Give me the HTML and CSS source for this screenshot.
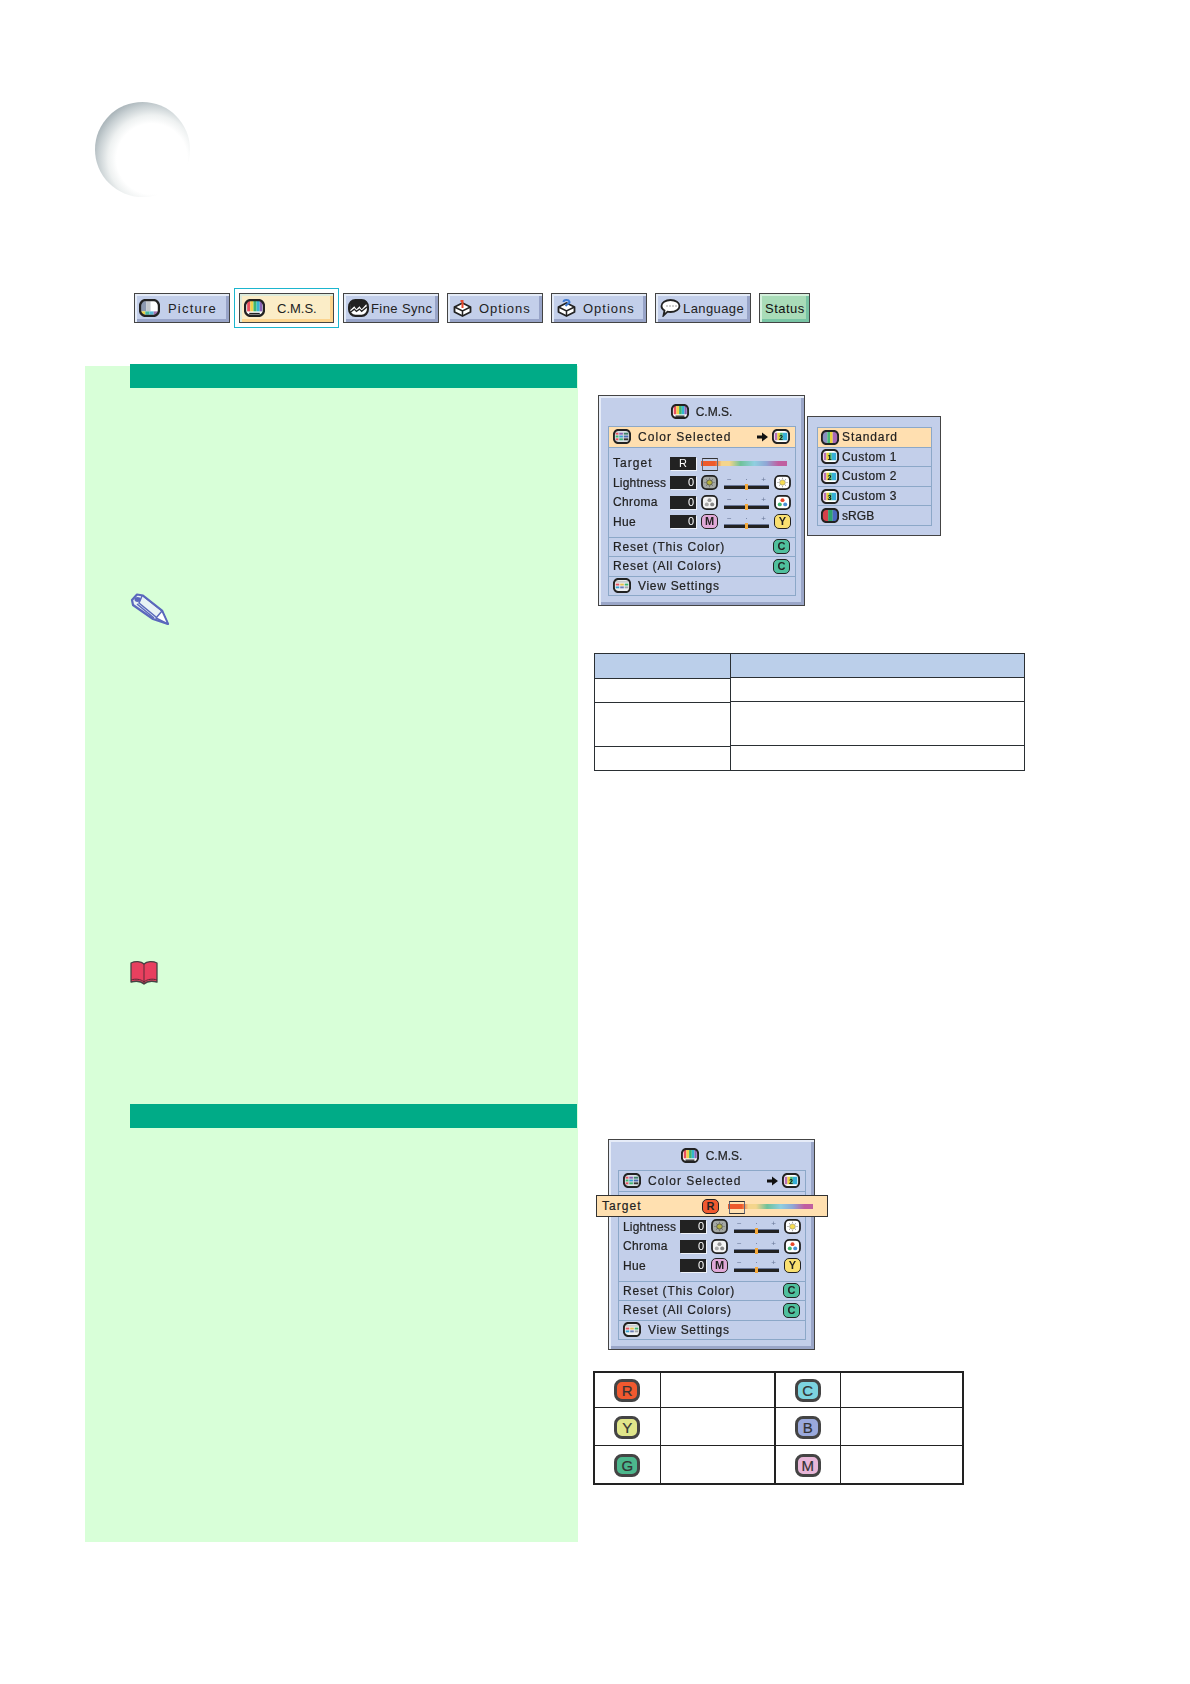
FILE: index.html
```html
<!DOCTYPE html>
<html lang="en">
<head>
<meta charset="utf-8">
<title>C.M.S.</title>
<link rel="stylesheet" href="styles.css">
</head>
<body>
<svg class="defs" aria-hidden="true">
  <symbol id="i-cms" viewBox="0 0 20 16" preserveAspectRatio="none">
    <rect x="1" y="1" width="18" height="14" rx="5" fill="#fff"/>
    <rect x="3" y="1.500" width="3" height="9.500" fill="#e8505f"/><rect x="6" y="1.500" width="3" height="9.500" fill="#f0d24a"/><rect x="9" y="1.500" width="3" height="9.500" fill="#3fb56f"/><rect x="12" y="1.500" width="3" height="9.500" fill="#35b6d0"/><rect x="15" y="1.500" width="2.500" height="9.500" fill="#8a62b5"/>
    <path d="M5 13h10" stroke="#222" stroke-width="1.400"/>
    <rect x="1" y="1" width="18" height="14" rx="5" fill="none" stroke="#222" stroke-width="2.200"/>
  </symbol>
  <symbol id="i-pic" viewBox="0 0 20 16" preserveAspectRatio="none">
    <rect x="1" y="1" width="18" height="14" rx="5" fill="#fff"/>
    <rect x="2" y="2" width="5" height="9" fill="#8c99b0"/><rect x="7" y="2" width="4" height="9" fill="#c4c8cc"/>
    <rect x="2" y="11" width="4" height="3" fill="#e8d24a"/><rect x="6" y="11" width="4" height="3" fill="#44b8a0"/><rect x="10" y="11" width="4" height="3" fill="#58b8d8"/><rect x="14" y="11" width="4" height="3" fill="#a070b0"/>
    <rect x="1" y="1" width="18" height="14" rx="5" fill="none" stroke="#222" stroke-width="2.200"/>
  </symbol>
  <symbol id="i-wave" viewBox="0 0 20 16" preserveAspectRatio="none">
    <rect x="1" y="1" width="18" height="14" rx="6" fill="#fff" stroke="#222" stroke-width="2"/>
    <path d="M2 10l4-3.500 2 2.500 3-2.500 2 2.500 5-5V4a4 4 0 0 0-4-3H7a5 5 0 0 0-5 4z" fill="#222"/>
    <path d="M2 12l4-3 2 2 3-2 2 2 5-4" fill="none" stroke="#222" stroke-width="1.200"/>
  </symbol>
  <symbol id="i-box1" viewBox="0 0 20 18">
    <path d="M2 8l8-4 8 4v5l-8 4-8-4z" fill="#fff" stroke="#222" stroke-width="1.800" stroke-linejoin="round"/>
    <path d="M2 8l8 4 8-4M10 12v5" fill="none" stroke="#222" stroke-width="1.500"/>
    <path d="M8 1h3v8H9V3H8z" fill="#e8482c"/>
  </symbol>
  <symbol id="i-box2" viewBox="0 0 20 18">
    <path d="M2 8l8-4 8 4v5l-8 4-8-4z" fill="#fff" stroke="#222" stroke-width="1.800" stroke-linejoin="round"/>
    <path d="M2 8l8 4 8-4M10 12v5" fill="none" stroke="#222" stroke-width="1.500"/>
    <path d="M7 3a3 2 0 1 1 4 2l-2 2" fill="none" stroke="#3b78d0" stroke-width="2"/>
  </symbol>
  <symbol id="i-bubble" viewBox="0 0 20 18">
    <path d="M10 1c5 0 9 2.600 9 6s-4 6-9 6c-1 0-2 0-3-.3L3 16.500l1-5C2 10.500 1 9 1 7c0-3.400 4-6 9-6z" fill="#fff" stroke="#222" stroke-width="1.800"/>
    <path d="M6 7h1M9 7h1M12 7h1M15 7h1" stroke="#444" stroke-width="1.200"/>
  </symbol>
  <symbol id="i-list" viewBox="0 0 20 16" preserveAspectRatio="none">
    <rect x="1" y="1" width="18" height="14" rx="5" fill="#d8e0e4"/>
    <rect x="3" y="4" width="3" height="2" fill="#e8505f"/><rect x="3" y="7" width="3" height="2" fill="#3fb56f"/><rect x="3" y="10" width="3" height="2" fill="#e8505f"/>
    <rect x="7" y="4" width="4" height="2" fill="#8a62b5"/><rect x="7" y="7" width="4" height="2" fill="#35a0d0"/><rect x="7" y="10" width="4" height="2" fill="#3fb56f"/>
    <rect x="12" y="4" width="5" height="2" fill="#3d7f6a"/><rect x="12" y="7" width="5" height="2" fill="#4a6ab0"/><rect x="12" y="10" width="5" height="2" fill="#333"/>
    <rect x="1" y="1" width="18" height="14" rx="5" fill="none" stroke="#222" stroke-width="2.200"/>
  </symbol>
  <symbol id="i-view" viewBox="0 0 20 16" preserveAspectRatio="none">
    <rect x="1" y="1" width="18" height="14" rx="5" fill="#eef0f2"/>
    <rect x="3" y="3" width="14" height="2" fill="#c8ccd0"/>
    <rect x="3" y="6" width="4" height="2" fill="#e8505f"/><rect x="8" y="6" width="4" height="2" fill="#e8c24a"/><rect x="13" y="6" width="4" height="2" fill="#3fb56f"/>
    <rect x="3" y="9" width="4" height="2" fill="#35a0d0"/><rect x="8" y="9" width="4" height="2" fill="#6a7ab8"/><rect x="13" y="9" width="4" height="2" fill="#a0a4a8"/>
    <rect x="1" y="1" width="18" height="14" rx="5" fill="none" stroke="#222" stroke-width="2.200"/>
  </symbol>
  <symbol id="i-std" viewBox="0 0 20 16" preserveAspectRatio="none">
    <rect x="1" y="1" width="18" height="14" rx="5" fill="#fff"/>
    <rect x="2" y="2" width="5" height="12" fill="#8a8fc0"/><rect x="7" y="2" width="3" height="12" fill="#48b878"/><rect x="10" y="2" width="3" height="12" fill="#ead23c"/><rect x="13" y="2" width="5" height="12" fill="#a868b8"/>
    <rect x="1" y="1" width="18" height="14" rx="5" fill="none" stroke="#222" stroke-width="2.200"/>
  </symbol>
  <symbol id="i-srgb" viewBox="0 0 20 16" preserveAspectRatio="none">
    <rect x="2" y="2" width="6" height="12" fill="#d8404a"/><rect x="8" y="2" width="5" height="12" fill="#2ea36e"/><rect x="13" y="2" width="5" height="12" fill="#4a68c0"/>
    <rect x="1" y="1" width="18" height="14" rx="5" fill="none" stroke="#222" stroke-width="2.200"/>
  </symbol>
  <symbol id="i-n" viewBox="0 0 20 16" preserveAspectRatio="none">
    <rect x="1" y="1" width="18" height="14" rx="5" fill="#fff"/>
    <rect x="3" y="4" width="3" height="8" fill="#b870b8"/><rect x="6" y="4" width="3" height="8" fill="#e8d23c"/><rect x="9" y="4" width="3" height="8" fill="#4ab878"/><rect x="12" y="4" width="5" height="8" fill="#38b0d8"/>
    <rect x="1" y="1" width="18" height="14" rx="5" fill="none" stroke="#222" stroke-width="2.200"/>
  </symbol>
  <symbol id="i-sun-off" viewBox="0 0 17 16" preserveAspectRatio="none">
    <rect x="1" y="1" width="15" height="14" rx="4.500" fill="#a4a8a4" stroke="#222" stroke-width="1.800"/>
    <circle cx="8.500" cy="8" r="2.800" fill="#b4b040" stroke="#444" stroke-width=".8"/>
    <path d="M8.500 3v1M8.500 12v1M3.500 8h1M12.500 8h1M5 4.500l.8.800M11.200 10.700l.8.800M12 4.500l-.8.800M5.800 10.700l-.8.800" stroke="#555" stroke-width=".8"/>
  </symbol>
  <symbol id="i-sun-on" viewBox="0 0 17 16" preserveAspectRatio="none">
    <rect x="1" y="1" width="15" height="14" rx="4.500" fill="#fff" stroke="#222" stroke-width="1.800"/>
    <circle cx="8.500" cy="8" r="2.800" fill="#f6dc50" stroke="#888" stroke-width=".6"/>
    <path d="M8.500 3v1M8.500 12v1M3.500 8h1M12.500 8h1M5 4.500l.8.800M11.200 10.700l.8.800M12 4.500l-.8.800M5.800 10.700l-.8.800" stroke="#666" stroke-width=".8"/>
  </symbol>
  <symbol id="i-dots-off" viewBox="0 0 17 16" preserveAspectRatio="none">
    <rect x="1" y="1" width="15" height="14" rx="4.500" fill="#f4f4f4" stroke="#222" stroke-width="1.800"/>
    <circle cx="8.500" cy="5.500" r="2" fill="#999"/><circle cx="5.800" cy="10" r="2" fill="#aaa"/><circle cx="11.200" cy="10" r="2" fill="#888"/>
  </symbol>
  <symbol id="i-dots-on" viewBox="0 0 17 16" preserveAspectRatio="none">
    <rect x="1" y="1" width="15" height="14" rx="4.500" fill="#fff" stroke="#222" stroke-width="1.800"/>
    <circle cx="8.500" cy="5.500" r="2" fill="#e8482c"/><circle cx="5.800" cy="10" r="2" fill="#3fb56f"/><circle cx="11.200" cy="10" r="2" fill="#4a90d8"/>
  </symbol>
  <symbol id="i-arrow" viewBox="0 0 11 10">
    <path d="M0 3.500h5V.500L11 5 5 9.500v-3H0z" fill="#111"/>
  </symbol>
</svg>

<div class="page">
  <div class="sphere"></div>

  <nav class="tabs">
    <div class="tab"><svg class="tab-ic"><use href="#i-pic"/></svg><span class="tab-text tab-text-pic">Picture</span></div>
    <div class="tab tab-active"><svg class="tab-ic"><use href="#i-cms"/></svg><span class="tab-text tab-text-cms">C.M.S.</span></div>
    <div class="tab"><svg class="tab-ic"><use href="#i-wave"/></svg><span class="tab-text tab-tight">Fine Sync</span></div>
    <div class="tab"><svg class="tab-ic"><use href="#i-box1"/></svg><span class="tab-text">Options</span></div>
    <div class="tab"><svg class="tab-ic"><use href="#i-box2"/></svg><span class="tab-text">Options</span></div>
    <div class="tab"><svg class="tab-ic"><use href="#i-bubble"/></svg><span class="tab-text tab-tight">Language</span></div>
    <div class="tab tab-status"><span class="tab-text tab-tight tab-strong">Status</span></div>
  </nav>

  <main class="columns">
    <section class="panel">
      <div class="bar bar-one"></div>
      <svg class="pencil" viewBox="0 0 40 32">
        <path d="M2 7L7 1.500l6 1 19 15 6 13.500-15-5L3 12z" fill="#e8f2f4" stroke="#5a68bc" stroke-width="2.200" stroke-linejoin="round"/>
        <ellipse cx="7.500" cy="6.500" rx="3" ry="2.400" fill="#5a68bc"/>
        <path d="M12 3L9 10 26 24M13 3l19 15M7 11l17 14" fill="none" stroke="#5a68bc" stroke-width="1.500"/>
        <path d="M32 18l-6 7 12 6z" fill="#fff" stroke="#5a68bc" stroke-width="1.500" stroke-linejoin="round"/>
      </svg>
      <svg class="book" viewBox="0 0 28 25">
        <path d="M14 4C11 1 5 1 1 3v19c4-1 10-1 13 2 3-3 9-3 13-2V3c-4-2-10-2-13 1z" fill="#e8405f" stroke="#444" stroke-width="1.300" stroke-linejoin="round"/>
        <path d="M14 4v20M1 20c4-1.500 10-1 13 2 3-3 9-3.500 13-2" fill="none" stroke="#5a2a38" stroke-width="1"/>
      </svg>
      <div class="bar bar-two"></div>
    </section>

    <aside class="side">
      <div class="menu-row">
        <div class="menu">
          <div class="menu-title"><svg class="ic"><use href="#i-cms"/></svg><span>C.M.S.</span></div>
          <div class="list">
            <div class="row row-hl"><svg class="ic"><use href="#i-list"/></svg><span class="grow ls">Color Selected</span><svg class="arrow"><use href="#i-arrow"/></svg><svg class="ic" viewBox="0 0 20 16" preserveAspectRatio="none"><use href="#i-n"/><text x="10" y="11.500" class="num">2</text></svg></div>
            <div class="block">
              <div class="adj"><span class="lab ls">Target</span><span class="val val-c">R</span><span class="spectrum spectrum-a"></span></div>
              <div class="adj"><span class="lab tight">Lightness</span><span class="val">0</span><svg class="ic-s"><use href="#i-sun-off"/></svg><span class="slider"><span class="marks"><i>−</i><i>·</i><i>+</i></span><span class="track"></span></span><svg class="ic-s"><use href="#i-sun-on"/></svg></div>
              <div class="adj"><span class="lab snug">Chroma</span><span class="val">0</span><svg class="ic-s"><use href="#i-dots-off"/></svg><span class="slider"><span class="marks"><i>−</i><i>·</i><i>+</i></span><span class="track"></span></span><svg class="ic-s"><use href="#i-dots-on"/></svg></div>
              <div class="adj"><span class="lab snug">Hue</span><span class="val">0</span><span class="chip chip-m">M</span><span class="slider"><span class="marks"><i>−</i><i>·</i><i>+</i></span><span class="track"></span></span><span class="chip chip-yy">Y</span></div>
            </div>
            <div class="row"><span class="grow ls-r">Reset (This Color)</span><span class="chip chip-t">C</span></div>
            <div class="row"><span class="grow ls-r">Reset (All Colors)</span><span class="chip chip-t">C</span></div>
            <div class="row"><svg class="ic"><use href="#i-view"/></svg><span class="grow ls-v">View Settings</span></div>
          </div>
        </div>

        <div class="submenu">
          <div class="sub-list">
            <div class="sub-row sub-hl"><svg class="ic"><use href="#i-std"/></svg><span>Standard</span></div>
            <div class="sub-row"><svg class="ic" viewBox="0 0 20 16" preserveAspectRatio="none"><use href="#i-n"/><text x="10" y="11.500" class="num">1</text></svg><span class="sub-c">Custom 1</span></div>
            <div class="sub-row"><svg class="ic" viewBox="0 0 20 16" preserveAspectRatio="none"><use href="#i-n"/><text x="10" y="11.500" class="num">2</text></svg><span class="sub-c">Custom 2</span></div>
            <div class="sub-row"><svg class="ic" viewBox="0 0 20 16" preserveAspectRatio="none"><use href="#i-n"/><text x="10" y="11.500" class="num">3</text></svg><span class="sub-c">Custom 3</span></div>
            <div class="sub-row"><svg class="ic"><use href="#i-srgb"/></svg><span class="sub-s">sRGB</span></div>
          </div>
        </div>
      </div>

      <div class="spec">
        <div class="spec-col spec-left">
          <div class="cell cell-head"></div><div class="cell c24"></div><div class="cell c44"></div><div class="cell c25"></div>
        </div>
        <div class="spec-col spec-right">
          <div class="cell cell-head2"></div><div class="cell c24"></div><div class="cell c44"></div><div class="cell c26"></div>
        </div>
      </div>

      <div class="menu menu-two">
        <div class="menu-title"><svg class="ic"><use href="#i-cms"/></svg><span>C.M.S.</span></div>
        <div class="list">
          <div class="row"><svg class="ic"><use href="#i-list"/></svg><span class="grow ls">Color Selected</span><svg class="arrow"><use href="#i-arrow"/></svg><svg class="ic" viewBox="0 0 20 16" preserveAspectRatio="none"><use href="#i-n"/><text x="10" y="11.500" class="num">2</text></svg></div>
          <div class="block">
            <div class="adj"></div>
            <div class="adj"><span class="lab tight">Lightness</span><span class="val">0</span><svg class="ic-s"><use href="#i-sun-off"/></svg><span class="slider"><span class="marks"><i>−</i><i>·</i><i>+</i></span><span class="track"></span></span><svg class="ic-s"><use href="#i-sun-on"/></svg></div>
            <div class="adj"><span class="lab snug">Chroma</span><span class="val">0</span><svg class="ic-s"><use href="#i-dots-off"/></svg><span class="slider"><span class="marks"><i>−</i><i>·</i><i>+</i></span><span class="track"></span></span><svg class="ic-s"><use href="#i-dots-on"/></svg></div>
            <div class="adj"><span class="lab snug">Hue</span><span class="val">0</span><span class="chip chip-m">M</span><span class="slider"><span class="marks"><i>−</i><i>·</i><i>+</i></span><span class="track"></span></span><span class="chip chip-yy">Y</span></div>
          </div>
          <div class="row"><span class="grow ls-r">Reset (This Color)</span><span class="chip chip-t">C</span></div>
          <div class="row"><span class="grow ls-r">Reset (All Colors)</span><span class="chip chip-t">C</span></div>
          <div class="row"><svg class="ic"><use href="#i-view"/></svg><span class="grow ls-v">View Settings</span></div>
        </div>
        <div class="target-bar"><span class="target-lab ls">Target</span><span class="chip chip-r">R</span><span class="spectrum spectrum-b"></span></div>
      </div>

      <table class="keys">
        <tr><td class="k"><span class="key key-r">R</span></td><td class="n"></td><td class="k k2"><span class="key key-c">C</span></td><td></td></tr>
        <tr><td class="k"><span class="key key-y">Y</span></td><td class="n"></td><td class="k k2"><span class="key key-b">B</span></td><td></td></tr>
        <tr><td class="k"><span class="key key-g">G</span></td><td class="n"></td><td class="k k2"><span class="key key-m">M</span></td><td></td></tr>
      </table>
    </aside>
  </main>
</div>
</body>
</html>
```

FILE: styles.css
```css
* { box-sizing: border-box; }
html, body { margin: 0; background: #fff; }
body { font-family: "Liberation Sans", Arial, sans-serif; color: #222; }
.defs { position: absolute; width: 0; height: 0; }
.num { font-size: 8px; font-weight: 700; text-anchor: middle; fill: #111; stroke: none; font-family: "Liberation Sans", Arial, sans-serif; }
.page { width: 1190px; height: 1684px; padding-top: 102px; overflow: hidden; }

.sphere {
  width: 95px; height: 95px; margin-left: 95px; border-radius: 50%;
  background: radial-gradient(circle 61px at 60% 60%, #fff 58%, #eef1f1 72%, #c8d0d3 88%, #a8b3b8 100%);
}

.tabs { display: flex; gap: 8px; margin: 96px 0 0 134px; }
.tab {
  width: 96px; height: 30px; display: flex; align-items: center; padding-left: 4px;
  border: 1.500px solid #444; background: #c3cfea;
  box-shadow: inset 2px 2px 0 #e4ebf7, inset -3px -3px 0 #98a4c8;
  font-size: 13px; letter-spacing: 1px; white-space: nowrap;
}
.tab-ic { width: 21px; height: 18px; flex: none; }
.tab-text { margin-left: 6px; }
.tab-tight { letter-spacing: .4px; margin-left: 2px; }
.tab-text-pic { margin-left: 8px; letter-spacing: 1.200px; }
.tab-text-cms { margin-left: 12px; letter-spacing: 0; }
.tab-active {
  width: 95px; margin: 0 1px 0 1px; background: #fbedc7; outline: 1.500px solid #1bb5ce; outline-offset: 4px;
  box-shadow: inset 2px 2px 0 #dcebdc, inset -3px -3px 0 #fcd48e;
}
.tab-status {
  width: 51px; padding-left: 5px; background: #a9dcb8;
  box-shadow: inset 2px 2px 0 #d4f0dc, inset -3px -3px 0 #78c4a4;
}
.tab-status .tab-text { margin-left: 0; }
.tab-strong { font-weight: 500; color: #111; letter-spacing: .5px; }

.columns { display: flex; margin: 43px 0 0 85px; }
.panel { width: 493px; height: 1176px; flex: none; background: #d8ffd8; display: flex; flex-direction: column; }
.bar { height: 24px; margin: 0 1px 0 45px; background: #00ab87; flex: none; }
.bar-one { margin-top: -2px; }
.pencil { width: 40px; height: 32px; margin: 205px 0 0 45px; flex: none; }
.book { width: 28px; height: 25px; margin: 335px 0 0 45px; flex: none; }
.bar-two { margin-top: 119px; }

.side { flex: none; width: 500px; display: flex; flex-direction: column; align-items: flex-start; }
.menu-row { display: flex; gap: 2px; margin: 29px 0 0 20px; align-items: flex-start; }

.menu {
  position: relative; width: 207px; height: 211px; padding: 30px 9px 0;
  border: 1.500px solid #444; background: #c3cfea; flex: none;
  box-shadow: inset 2px 2px 0 #e6ecf8, inset -3px -3px 0 #9aa6c8;
  font-size: 12px; filter: blur(.3px); -webkit-text-stroke: .2px #222;
}
.menu-title { position: absolute; top: 8px; left: 0; right: 0; display: flex; justify-content: center; align-items: center; gap: 7px; }
.ic { width: 18px; height: 15px; flex: none; }
.ic-s { width: 17px; height: 15px; flex: none; }
.list { width: 188px; border: 1px solid #8ca8c8; }
.row { height: 19.500px; display: flex; align-items: center; padding: 0 5px 0 4px; border-top: 1px solid #8ca8c8; }
.row:first-child { border-top: 0; }
.row .ic:first-child { margin-right: 7px; }
.row-hl { background: #ffdfb0; }
.grow { flex: 1; }
.ls { letter-spacing: 1.050px; }
.ls-r { letter-spacing: .82px; }
.ls-v { letter-spacing: .7px; }
.tight { letter-spacing: .2px; }
.snug { letter-spacing: .35px; }
.arrow { width: 11px; height: 10px; margin-right: 4px; flex: none; }
.block { height: 90px; padding-top: 6px; border-top: 1px solid #8ca8c8; }
.adj { height: 19.500px; display: flex; align-items: center; padding-left: 4px; }
.lab { width: 57px; flex: none; white-space: nowrap; }
.val {
  width: 26px; height: 13px; flex: none; background: #222; color: #fff; text-align: right; padding-right: 2px;
  font-size: 11px; line-height: 13px; box-shadow: 1px 1px 0 #eef2fa; margin-right: 5px; -webkit-text-stroke: 0;
}
.val-c { text-align: center; padding-right: 0; }
.slider { width: 45px; margin: 0 5px 0 6px; flex: none; display: flex; flex-direction: column; position: relative; -webkit-text-stroke: 0; }
.marks { display: flex; justify-content: space-between; font-size: 8px; line-height: 7px; color: #6a7898; padding: 0 3px; }
.marks i { font-style: normal; }
.track { display: block; height: 4px; margin-top: 2px; background: #222; border-top: 1px solid #6a7898; position: relative; }
.track::after { content: ""; position: absolute; left: 21px; top: -2px; width: 3px; height: 6px; background: #f4a93c; }
.chip {
  width: 17px; height: 15px; flex: none; border: 1.500px solid #222; border-radius: 5px;
  font-size: 11px; font-weight: 700; line-height: 12px; text-align: center; letter-spacing: 0; -webkit-text-stroke: 0;
}
.chip-m { background: #e0a8d8; }
.chip-yy { background: #fae070; }
.chip-t { background: #4fbf9d; }
.chip-r { background: #f0592f; }
.spectrum {
  display: block; position: relative; height: 5px; flex: none;
  background: linear-gradient(90deg, #ee5a2c 0 16%, #f4d58c 24% 33%, #6fc29a 46%, #8fcfe0 62%, #8fa7d6 76%, #c05fa0 90%);
}
.spectrum::before { content: ""; position: absolute; left: 1px; top: -3px; width: 14px; height: 11px; border: 1px solid #667; border-top: 1.500px solid #333; border-bottom: 1.500px solid #333; }
.spectrum-a { width: 86px; margin-left: 0; }

.submenu {
  width: 134px; height: 120px; margin-top: 21px; padding: 10px 9px;
  border: 1.500px solid #444; background: #c3cfea; flex: none;
  font-size: 12px; letter-spacing: .9px; filter: blur(.3px); -webkit-text-stroke: .2px #222;
}
.sub-list { width: 115px; border: 1px solid #8ca8c8; border-bottom: 0; }
.sub-row { height: 19.600px; display: flex; align-items: center; gap: 3px; padding-left: 3px; border-bottom: 1px solid #8ca8c8; white-space: nowrap; }
.sub-hl { background: #ffdfb0; }
.sub-c { letter-spacing: .45px; }
.sub-s { letter-spacing: .1px; }

.spec { display: flex; margin: 47px 0 0 16px; width: 431px; height: 118px; }
.spec-col { display: flex; flex-direction: column; border: 1px solid #2a2f33; }
.spec-left { width: 137px; }
.spec-right { width: 294px; border-left: 0; }
.cell { border-bottom: 1px solid #2a2f33; flex: none; }
.cell:last-child { border-bottom: 0; }
.cell-head { height: 25px; background: #bbcfea; }
.cell-head2 { height: 24px; background: #bbcfea; }
.c24 { height: 24px; }
.c44 { height: 44px; }
.c25 { height: 25px; }
.c26 { height: 26px; }

.menu-two { margin: 368px 0 0 30px; filter: none; }
.menu-two .list, .menu-two .menu-title { filter: blur(.3px); }
.target-bar {
  position: absolute; left: -13px; top: 55px; width: 232px; height: 22px; display: flex; align-items: center;
  padding-left: 5px; background: #ffe0b0; border: 1px solid #333;
}
.target-lab { width: 100px; }
.spectrum-b { width: 85px; margin-left: 9px; }

.keys {
  width: 371px; height: 114px; margin: 21px 0 0 15px; table-layout: fixed;
  border-collapse: collapse; border: 2px solid #222;
}
.keys td { border: 1px solid #222; padding: 0; text-align: center; vertical-align: middle; }
.keys tr + tr td.k { padding-top: 2px; }
.keys td.k { width: 66px; }
.keys td.n { width: 115px; border-right: 2px solid #222; }
.keys td.k2 { width: 65px; }
.key {
  display: inline-block; width: 26px; height: 23px; border: 3px solid #444; border-radius: 8px;
  font-size: 15px; line-height: 17px; color: #333; vertical-align: middle; -webkit-text-stroke: .2px #333;
}
.key-r { background: #f0592f; }
.key-y { background: #e0e68a; }
.key-g { background: #4cb78c; }
.key-c { background: #7cd3df; }
.key-b { background: #9aa9dc; }
.key-m { background: #e8b6d8; }
```
